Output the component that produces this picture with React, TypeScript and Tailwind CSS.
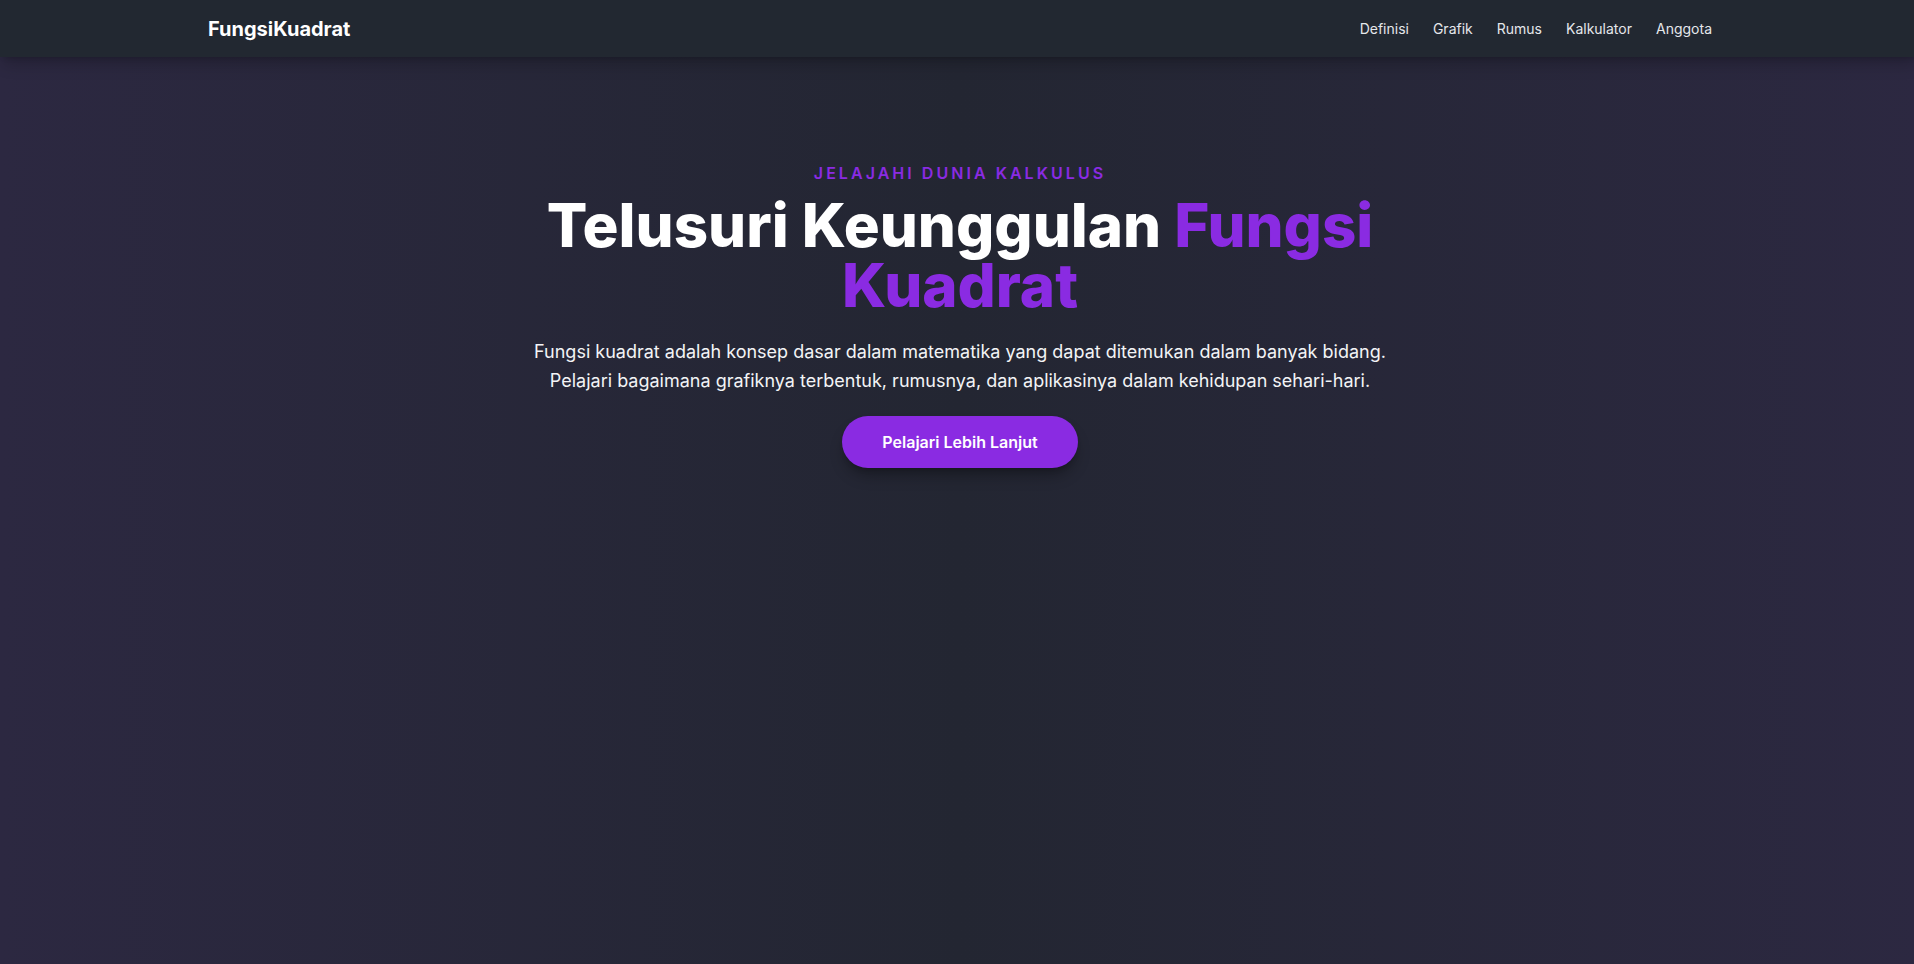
import React from 'react';

const links = ['Definisi', 'Grafik', 'Rumus', 'Kalkulator', 'Anggota'];

export default function App() {
  return (
    <div className="min-h-screen overflow-hidden bg-[#232632]">
      <div className="flex min-h-screen w-[1920px] flex-col bg-linear-to-r from-[#2c2841] via-[#232632] to-[#2c2841] font-['Inter',sans-serif] text-white">
        <header className="relative z-10 h-[57px] shrink-0 bg-[#222831] shadow-lg shadow-black/20">
          <div className="container mx-auto flex h-full items-center justify-between px-4">
            <a href="#" className="text-xl font-bold text-white">
              FungsiKuadrat
            </a>
            <nav className="flex items-center gap-6">
              {links.map((l) => (
                <a key={l} href="#" className="text-sm text-gray-200 hover:text-white">
                  {l}
                </a>
              ))}
            </nav>
          </div>
        </header>

        <section className="flex flex-1 flex-col items-center px-4 pt-[104px] text-center">
          <p className="mb-2.5 text-base font-semibold uppercase tracking-[0.19em] text-[#8a2be2]">
            Jelajahi Dunia Kalkulus
          </p>
          <h1 className="mb-[22px] max-w-4xl text-6xl leading-none font-extrabold">
            Telusuri Keunggulan <span className="text-[#8a2be2]">Fungsi Kuadrat</span>
          </h1>
          <p className="max-w-4xl text-lg leading-relaxed text-gray-100">
            Fungsi kuadrat adalah konsep dasar dalam matematika yang dapat ditemukan dalam banyak bidang.
            Pelajari bagaimana grafiknya terbentuk, rumusnya, dan aplikasinya dalam kehidupan sehari-hari.
          </p>
          <a
            href="#"
            className="mt-5 rounded-full bg-[#8a2be2] px-10 py-3.5 text-base font-semibold text-white shadow-lg shadow-black/30 hover:bg-[#7a22cc]"
          >
            Pelajari Lebih Lanjut
          </a>
        </section>
      </div>
    </div>
  );
}
